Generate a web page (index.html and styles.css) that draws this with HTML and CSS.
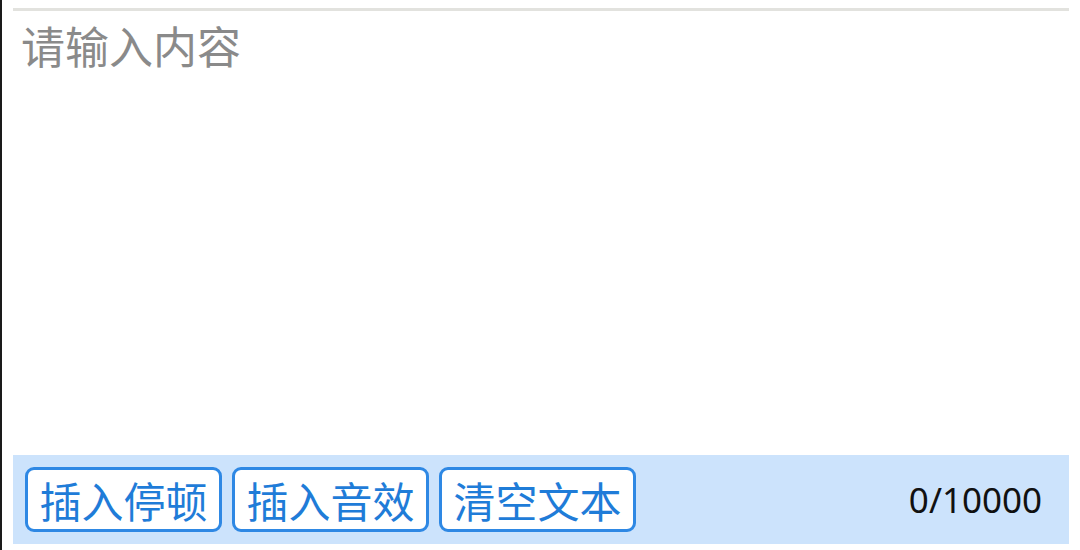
FILE: index.html
```html
<!DOCTYPE html>
<html lang="zh">
<head>
<meta charset="utf-8">
<link rel="stylesheet" href="styles.css">
</head>
<body>
<div class="page">
  <div class="editor">
    <div class="placeholder">请输入内容</div>
  </div>
  <div class="toolbar">
    <div class="btn">插入停顿</div>
    <div class="btn">插入音效</div>
    <div class="btn">清空文本</div>
    <div class="counter">0/10000</div>
  </div>
</div>
</body>
</html>
```
FILE: styles.css
```css
html, body {
  margin: 0;
  padding: 0;
  background: #ffffff;
}
.page {
  box-sizing: border-box;
  width: 1080px;
  height: 550px;
  border-left: 2px solid #1a1a1a;
  padding: 8px 11px 6px 11px;
  display: flex;
  flex-direction: column;
  font-family: "Noto Sans", "Noto Sans CJK SC", sans-serif;
}
.editor {
  flex: 1;
  border-top: 3px solid #e2e2de;
  padding: 10px 8px 0 8px;
}
.placeholder {
  font-size: 44px;
  line-height: 1.2;
  color: #8a8a8a;
}
.toolbar {
  height: 89px;
  background: #cce3fc;
  display: flex;
  align-items: center;
  gap: 10px;
  padding: 0 27px 0 12px;
}
.btn {
  box-sizing: border-box;
  height: 65px;
  padding: 0 11.5px;
  border: 3px solid #2e88e4;
  border-radius: 9px;
  background: #ffffff;
  color: #1f7cd8;
  font-size: 42px;
  display: flex;
  align-items: center;
  font-family: "Noto Sans CJK SC", sans-serif;
}
.counter {
  margin-left: auto;
  font-size: 35px;
  color: #111111;
}
```
